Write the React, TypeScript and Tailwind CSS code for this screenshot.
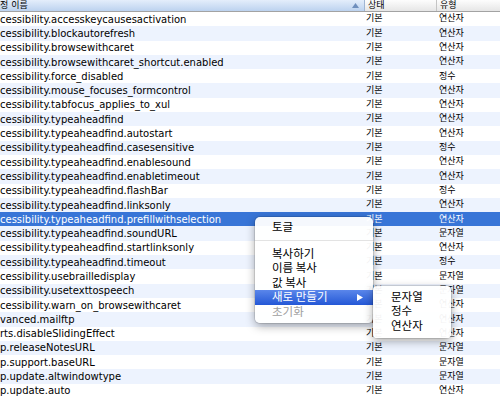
import React from "react";

type Pref = { name: string; status: string; type: string };

const PREFS: Pref[] = [
  { name: "cessibility.accesskeycausesactivation", status: "기본", type: "연산자" },
  { name: "cessibility.blockautorefresh", status: "기본", type: "연산자" },
  { name: "cessibility.browsewithcaret", status: "기본", type: "연산자" },
  { name: "cessibility.browsewithcaret_shortcut.enabled", status: "기본", type: "연산자" },
  { name: "cessibility.force_disabled", status: "기본", type: "정수" },
  { name: "cessibility.mouse_focuses_formcontrol", status: "기본", type: "연산자" },
  { name: "cessibility.tabfocus_applies_to_xul", status: "기본", type: "연산자" },
  { name: "cessibility.typeaheadfind", status: "기본", type: "연산자" },
  { name: "cessibility.typeaheadfind.autostart", status: "기본", type: "연산자" },
  { name: "cessibility.typeaheadfind.casesensitive", status: "기본", type: "정수" },
  { name: "cessibility.typeaheadfind.enablesound", status: "기본", type: "연산자" },
  { name: "cessibility.typeaheadfind.enabletimeout", status: "기본", type: "연산자" },
  { name: "cessibility.typeaheadfind.flashBar", status: "기본", type: "정수" },
  { name: "cessibility.typeaheadfind.linksonly", status: "기본", type: "연산자" },
  { name: "cessibility.typeaheadfind.prefillwithselection", status: "기본", type: "연산자" },
  { name: "cessibility.typeaheadfind.soundURL", status: "기본", type: "문자열" },
  { name: "cessibility.typeaheadfind.startlinksonly", status: "기본", type: "연산자" },
  { name: "cessibility.typeaheadfind.timeout", status: "기본", type: "정수" },
  { name: "cessibility.usebrailledisplay", status: "기본", type: "문자열" },
  { name: "cessibility.usetexttospeech", status: "기본", type: "문자열" },
  { name: "cessibility.warn_on_browsewithcaret", status: "기본", type: "연산자" },
  { name: "vanced.mailftp", status: "기본", type: "연산자" },
  { name: "rts.disableSlidingEffect", status: "기본", type: "연산자" },
  { name: "p.releaseNotesURL", status: "기본", type: "문자열" },
  { name: "p.support.baseURL", status: "기본", type: "문자열" },
  { name: "p.update.altwindowtype", status: "기본", type: "문자열" },
  { name: "p.update.auto", status: "기본", type: "연산자" },
];

const SELECTED = 14;

export default function App() {
  return (
    <div
      className="relative w-[500px] h-[402px] overflow-hidden bg-white text-black"
      style={{ fontFamily: '"DejaVu Sans", "Noto Sans CJK KR", sans-serif' }}
    >
      {/* Column header */}
      <div className="flex h-[12px] border-b border-[#a3a3a3] text-[9px] leading-[11px]">
        <div className="w-[365px] flex items-center justify-between pr-[3px] border-r border-[#9fb5d3] bg-gradient-to-b from-[#e4eefb] to-[#bcd2ef]">
          <span>정 이름</span>
          <svg width="7" height="5" viewBox="0 0 7 5" className="mr-[2px]">
            <path d="M3.5 0 L7 5 L0 5 Z" fill="#6f8fbd" />
          </svg>
        </div>
        <div className="w-[72px] pl-[3px] border-r border-[#c4c4c4] bg-gradient-to-b from-[#fdfdfd] to-[#e6e6e6]">
          상태
        </div>
        <div className="flex-1 pl-[3px] bg-gradient-to-b from-[#fdfdfd] to-[#e6e6e6]">유형</div>
      </div>

      {/* Rows */}
      <div>
        {PREFS.map((p, i) => (
          <div
            key={p.name}
            className={
              i === SELECTED
                ? "flex h-[14.3px] items-center bg-[#3875d7] text-white"
                : i % 2 === 1
                ? "flex h-[14.3px] items-center bg-[#edf3fe]"
                : "flex h-[14.3px] items-center bg-white"
            }
          >
            <div className="w-[366px] whitespace-nowrap overflow-hidden text-[10px]">{p.name}</div>
            <div className="w-[73px] whitespace-nowrap text-[9px]">{p.status}</div>
            <div className="flex-1 whitespace-nowrap text-[9px]">{p.type}</div>
          </div>
        ))}
      </div>

      {/* Context menu */}
      <div
        className="absolute left-[255px] top-[217px] w-[118px] rounded-[5px] bg-white/95 pt-[2px] pb-[4px] text-[11.5px] shadow-[0_3px_10px_rgba(0,0,0,0.35)] ring-1 ring-black/10"
        style={{ fontFamily: '"Noto Sans CJK KR", sans-serif' }}
      >
        <div className="h-[15px] flex items-center pl-[17px]">토글</div>
        <div className="h-[12px] flex items-center">
          <div className="w-full h-px bg-[#e3e3e3]" />
        </div>
        <div className="h-[14.5px] flex items-center pl-[17px]">복사하기</div>
        <div className="h-[14.5px] flex items-center pl-[17px]">이름 복사</div>
        <div className="h-[14.5px] flex items-center pl-[17px]">값 복사</div>
        <div className="h-[15px] flex items-center justify-between pl-[17px] pr-[10px] text-white bg-gradient-to-b from-[#5a86ea] to-[#2457d6]">
          <span>새로 만들기</span>
          <svg width="6" height="7" viewBox="0 0 6 7">
            <path d="M0 0 L6 3.5 L0 7 Z" fill="#ffffff" />
          </svg>
        </div>
        <div className="h-[14.5px] flex items-center pl-[17px] text-[#a0a0a0]">초기화</div>
      </div>

      {/* Submenu */}
      <div
        className="absolute left-[373px] top-[286px] w-[78px] rounded-[4px] bg-white/95 pt-[3px] pb-[5px] text-[11.5px] shadow-[0_3px_10px_rgba(0,0,0,0.35)] ring-1 ring-black/10"
        style={{ fontFamily: '"Noto Sans CJK KR", sans-serif' }}
      >
        <div className="h-[14.5px] flex items-center pl-[18px]">문자열</div>
        <div className="h-[14.5px] flex items-center pl-[18px]">정수</div>
        <div className="h-[14.5px] flex items-center pl-[18px]">연산자</div>
      </div>
    </div>
  );
}
